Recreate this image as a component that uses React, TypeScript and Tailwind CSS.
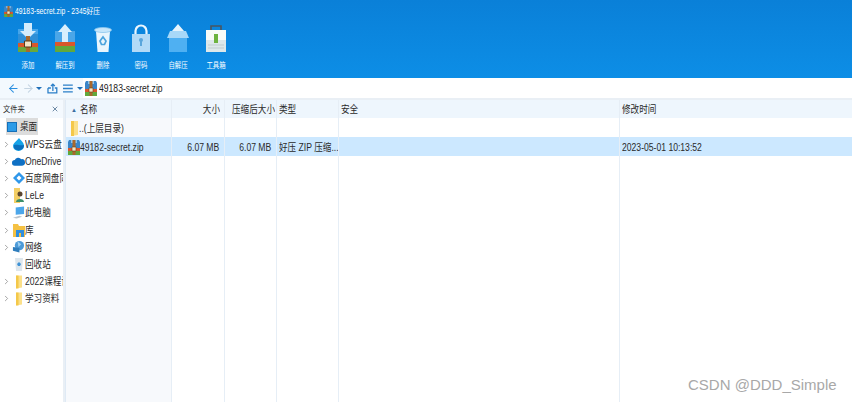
import React from 'react';
import { ArrowLeft, ArrowRight, ChevronRight, X } from 'lucide-react';

const ZipIcon = ({ w = 12, h = 15 }: { w?: number; h?: number }) => (
  <svg width={w} height={h} viewBox="0 0 12 15" className="shrink-0">
    <path d="M1 0h10l1 2v7H0V2z" fill="#3a85c8" />
    <path d="M3 0h6v3H3z" fill="#8cc4ee" />
    <path d="M0 8h12v3H0z" fill="#d9572b" />
    <path d="M0 11h12v4H0z" fill="#62a83c" />
    <path d="M4.5 0h3v15h-3z" fill="#a9682c" />
    <path d="M4 7h4v4H4z" fill="#f3e4c4" stroke="#6d4218" strokeWidth=".6" />
  </svg>
);

const Folder = ({ w = 7, h = 15 }: { w?: number; h?: number }) => (
  <svg width={w} height={h} viewBox="0 0 7 15" className="shrink-0">
    <path d="M0 0h7v14l-7 1z" fill="#fbe08a" />
    <path d="M0 0h3v15H0z" fill="#f4c84a" />
  </svg>
);

const AddIcon = () => (
  <svg width="20" height="30" viewBox="0 0 20 30">
    <path d="M0 6h20v15H0z" fill="#45a5ea" />
    <path d="M0 11h20v10H0z" fill="#2f8fd6" />
    <path d="M6 0h8v8h4l-8 8-8-8h4z" fill="#d4ecfc" />
    <path d="M0 20h20v4H0z" fill="#d9572b" />
    <path d="M0 24h20v5H0z" fill="#6aa83c" />
    <path d="M8 13h4v16H8z" fill="#a9682c" />
    <path d="M6.5 18h7v6h-7z" fill="#f3e4c4" stroke="#5d3a18" />
  </svg>
);

const ExtractIcon = () => (
  <svg width="20" height="30" viewBox="0 0 20 30">
    <path d="M0 8h20v12H0z" fill="#4aa6e8" />
    <path d="M10 1l7 8h-4v11H7V9H3z" fill="#d8effd" />
    <path d="M0 19h20v4H0z" fill="#d9572b" />
    <path d="M0 23h20v6H0z" fill="#62a83c" />
  </svg>
);

const TrashIcon = () => (
  <svg width="18" height="26" viewBox="0 0 18 26">
    <path d="M2 4h14l-1.5 21h-11z" fill="#e8f5fd" />
    <ellipse cx="9" cy="3" rx="8.5" ry="2.5" fill="#c6e6fb" stroke="#8cc7ee" strokeWidth=".8" />
    <path d="M6 14l3-4 3 4-1.5 3.5h-3z" fill="none" stroke="#4ba3dd" strokeWidth="1.7" />
  </svg>
);

const LockIcon = () => (
  <svg width="18" height="30" viewBox="0 0 18 30">
    <path d="M3.5 12V8a5.5 5.5 0 0 1 11 0v4" fill="none" stroke="#eaf6fe" strokeWidth="2.2" />
    <path d="M0 11h18v18H0z" fill="#b2daf7" />
    <circle cx="9" cy="17" r="2" fill="#5aa6dc" />
    <path d="M8 17h2v6H8z" fill="#5aa6dc" />
  </svg>
);

const SelfExtractIcon = () => (
  <svg width="22" height="30" viewBox="0 0 22 30">
    <path d="M11 1l6 7h-3v6H8V8H5z" fill="#e6f4fd" />
    <path d="M2 13h18v16H2z" fill="#4fb0f2" />
    <path d="M3 8h16l3 7H0z" fill="#a8d8f8" />
  </svg>
);

const ToolboxIcon = () => (
  <svg width="20" height="28" viewBox="0 0 20 28">
    <path d="M5 5V1h10v4" fill="none" stroke="#4a5560" strokeWidth="1.6" />
    <path d="M0 5h20v10H0z" fill="#f8fbf8" />
    <path d="M0 15h20v12H0z" fill="#dde8ea" />
    <path d="M8 9h4v9H8z" fill="#6db33f" />
    <path d="M2 20h16M2 23h16" stroke="#bfccd0" />
  </svg>
);

const tools = [
  { label: '添加', icon: <AddIcon /> },
  { label: '解压到', icon: <ExtractIcon /> },
  { label: '删除', icon: <TrashIcon /> },
  { label: '密码', icon: <LockIcon /> },
  { label: '自解压', icon: <SelfExtractIcon /> },
  { label: '工具箱', icon: <ToolboxIcon /> },
];

const WpsIcon = () => (
  <svg width="13" height="13" viewBox="0 0 13 13">
    <path d="M7 0c1 2 5 4 5 8a5.500 5 0 0 1-11 0C1 5 5 3 7 0z" fill="#16a3e8" />
    <path d="M2 7c3-1 6 1 10 0a5.500 5 0 0 1-10 3z" fill="#0b6fbd" />
  </svg>
);
const CloudIcon = () => (
  <svg width="14" height="11" viewBox="0 0 14 11">
    <path d="M3 10a3 3 0 0 1 0-6 4 4 0 0 1 7-1 3.500 3.500 0 0 1 1 7z" fill="#0f70c4" />
  </svg>
);
const BaiduIcon = () => (
  <svg width="12" height="12" viewBox="0 0 12 12">
    <path d="M6 0l6 6-6 6-6-6z" fill="#2f97ea" />
    <path d="M6 3.500L8.500 6 6 8.500 3.500 6z" fill="#fff" />
  </svg>
);
const UserIcon = () => (
  <svg width="10" height="15" viewBox="0 0 10 15">
    <path d="M0 0h6v15H0z" fill="#f4cf66" />
    <circle cx="6" cy="6" r="2.500" fill="#5b4630" />
    <path d="M2 14c0-4 8-4 8 0z" fill="#3c8f6a" />
  </svg>
);
const PcIcon = () => (
  <svg width="14" height="14" viewBox="0 0 14 14">
    <path d="M4 1l9-1v8l-9 1z" fill="#4ba6ea" />
    <path d="M1 12l7-2 3 1-6 2z" fill="#b9c3cc" />
  </svg>
);
const LibIcon = () => (
  <svg width="12" height="13" viewBox="0 0 12 13">
    <path d="M0 0h5l1 2h6v11H0z" fill="#f5c143" />
    <path d="M3 6h8v7H8V9H6v4H3z" fill="#2f8ede" />
  </svg>
);
const NetIcon = () => (
  <svg width="14" height="14" viewBox="0 0 14 14">
    <circle cx="8" cy="5.500" r="5" fill="#4d9bd8" />
    <path d="M1 7l7 1v5l-7-2z" fill="#2f7dbc" />
    <path d="M6 1l4 3-3 3z" fill="#9fd0f2" />
  </svg>
);
const BinIcon = () => (
  <svg width="10" height="14" viewBox="0 0 10 14">
    <path d="M1 1h8l-1 13H2z" fill="#dde6ec" />
    <path d="M3 7l2-2 2 2-1 2H4z" fill="#3f93d6" />
  </svg>
);

const tree = [
  { label: 'WPS云盘', icon: <WpsIcon /> },
  { label: 'OneDrive', icon: <CloudIcon /> },
  { label: '百度网盘同', icon: <BaiduIcon /> },
  { label: 'LeLe', icon: <UserIcon /> },
  { label: '此电脑', icon: <PcIcon /> },
  { label: '库', icon: <LibIcon /> },
  { label: '网络', icon: <NetIcon /> },
  { label: '回收站', icon: <BinIcon />, noArrow: true },
  { label: '2022课程设', icon: <Folder w={6} h={14} /> },
  { label: '学习资料', icon: <Folder w={6} h={14} /> },
];

// 列宽 (px)
const grid = 'grid grid-cols-[106px_53px_52px_62px_281px_1fr]';
const line = 'border-r border-[#e6eef6]';
const selected = 'bg-[#cce8ff]';

// 原图文字被横向压缩过
const T = ({ children, right }: { children: React.ReactNode; right?: boolean }) => (
  <span className={`inline-block whitespace-nowrap scale-x-[.86] ${right ? 'origin-right' : 'origin-left'}`}>{children}</span>
);

export default function App() {
  return (
    <div
      className="relative w-[852px] h-[402px] overflow-hidden bg-white text-[10px] text-[#2a2a2a] flex flex-col"
      style={{ fontFamily: '"Liberation Sans", "Noto Sans CJK SC", sans-serif' }}
    >
      {/* 顶部工具栏 */}
      <div className="h-[78px] bg-gradient-to-b from-[#0a80d8] to-[#0d8ee6] text-white shrink-0">
        <div className="h-[23px] flex items-center gap-[2px] pl-[4px] text-[8.5px]">
          <ZipIcon w={9} h={11} />
          <span className="inline-block whitespace-nowrap origin-left scale-x-[.8]">49183-secret.zip - 2345好压</span>
        </div>
        <div className="flex pl-[9px]">
          {tools.map((t) => (
            <div key={t.label} className="w-[37.6px] flex flex-col items-center text-[8px]">
              <div className="h-[30px] flex items-end">{t.icon}</div>
              <span className="mt-[8px] leading-[10px] whitespace-nowrap scale-x-[.8]">{t.label}</span>
            </div>
          ))}
        </div>
      </div>

      {/* 地址栏 */}
      <div className="h-[20px] bg-[#f3f9fe] flex items-center shrink-0">
        <div className="w-[83px] flex items-center pl-[7px] shrink-0 text-[#2b8fe0]">
          <ArrowLeft size={13} strokeWidth={2} />
          <ArrowRight size={13} strokeWidth={2} className="text-[#c4d4e2] ml-[2px]" />
          <span className="ml-[2px] border-x-[3px] border-t-[3px] border-x-transparent border-t-[#1f6fb8]" />
          <svg width="11" height="11" viewBox="0 0 11 11" className="ml-[5px]" fill="none" stroke="#2b7fc8" strokeWidth="1.3">
            <path d="M1 5h3M1 5v5h9V5H8M6 8V1M4 3l2-2 2 2" />
          </svg>
          <svg width="10" height="9" viewBox="0 0 10 9" className="ml-[5px]" stroke="#2b7fc8" strokeWidth="1.4">
            <path d="M0 1h10M0 4.500h10M0 8h10" />
          </svg>
          <span className="ml-[4px] border-x-[3px] border-t-[3px] border-x-transparent border-t-[#1f6fb8]" />
        </div>
        <div className="flex-1 h-full bg-white flex items-center gap-[2px] pl-[2px] text-[#222]">
          <ZipIcon />
          <T>49183-secret.zip</T>
        </div>
      </div>

      <div className="flex flex-1 min-h-0 pt-[2px] bg-[#e9eff5]">
        {/* 左侧文件夹树 */}
        <div className="w-[63px] bg-white shrink-0 overflow-hidden">
          <div className="h-[18px] bg-[#f4f9fe] flex items-center justify-between pl-[3px] pr-[4px] text-[8.5px]">
            <T>文件夹</T>
            <X size={8} strokeWidth={3} className="text-[#6f8ba6]" />
          </div>
          <div className="h-[17.500px] flex items-center">
            <div className="ml-[6px] w-[32px] h-[17px] bg-[#dcdcdc] flex items-center gap-[3px] pl-[1px] shrink-0">
              <span className="w-[10px] h-[10px] bg-[#2b9be8] border border-[#1670b8] shrink-0" />
              <T>桌面</T>
            </div>
          </div>
          {tree.map((n) => (
            <div key={n.label} className="h-[17.200px] flex items-center">
              <span className="w-[12px] shrink-0 flex justify-center">
                {!n.noArrow && <ChevronRight size={9} className="text-[#8a8a8a]" />}
              </span>
              <span className="w-[13px] shrink-0 flex justify-center">{n.icon}</span>
              <T>{n.label}</T>
            </div>
          ))}
        </div>

        {/* 文件列表 */}
        <div className="flex-1 min-w-0 ml-[2px] bg-white border-l border-[#dfeaf5] flex flex-col">
          <div className={`${grid} h-[18px] bg-[#eef6fd] leading-[20px]`}>
            <div className={`${line} border-[#d9e6f2] pl-[5px] flex items-center gap-[3px]`}>
              <span className="text-[#3b6ea0] text-[6px]">▲</span>
              <T>名称</T>
            </div>
            <div className={`${line} border-[#d9e6f2] text-right pr-[4px]`}><T right>大小</T></div>
            <div className={`${line} border-[#d9e6f2] text-right pr-[4px]`}><T right>压缩后大小</T></div>
            <div className={`${line} border-[#d9e6f2] pl-[2px]`}><T>类型</T></div>
            <div className={`${line} border-[#d9e6f2] pl-[2px]`}><T>安全</T></div>
            <div className="pl-[2px]"><T>修改时间</T></div>
          </div>

          <div className={`${grid} flex-1 grid-rows-[19px_19px_1fr] leading-[21px]`}>
            <div className={`${line} bg-[#f7f9fc] flex items-center gap-[1px] pl-[5px] pt-[1px]`}>
              <Folder />
              <T>..(上层目录)</T>
            </div>
            <div className={line} />
            <div className={line} />
            <div className={line} />
            <div className={line} />
            <div />

            <div className={`${line} ${selected} flex items-center pl-[2px] pt-[1px]`}>
              <ZipIcon />
              <T>49182-secret.zip</T>
            </div>
            <div className={`${line} ${selected} text-right pr-[5px]`}><T right>6.07 MB</T></div>
            <div className={`${line} ${selected} text-right pr-[5px]`}><T right>6.07 MB</T></div>
            <div className={`${line} ${selected} pl-[2px] overflow-hidden`}><T>好压 ZIP 压缩...</T></div>
            <div className={`${line} ${selected}`} />
            <div className={`${selected} pl-[2px]`}><T>2023-05-01 10:13:52</T></div>

            <div className={`${line} bg-[#f7f9fc]`} />
            <div className={line} />
            <div className={line} />
            <div className={line} />
            <div className={line} />
            <div />
          </div>
        </div>
      </div>

      {/* 水印 */}
      <span className="absolute left-[688px] top-[377px] text-[15px] leading-[16px] text-[#a8a8a8]">CSDN @DDD_Simple</span>
    </div>
  );
}
